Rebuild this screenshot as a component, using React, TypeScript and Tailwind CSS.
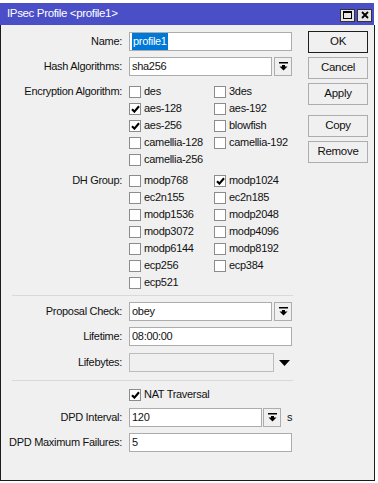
import React from 'react'

const FONT = "[font-family:'Liberation_Sans',Arial,sans-serif]"

function Check({ checked }: { checked?: boolean }) {
  return (
    <span className="w-[12px] h-[12px] bg-white border border-[#8c8c8c] flex items-center justify-center shrink-0">
      {checked && (
        <svg width="9" height="8" viewBox="0 0 9 8">
          <path d="M1 4.2 L3.4 6.6 L8 1.2" stroke="#000" strokeWidth="2.1" fill="none" />
        </svg>
      )}
    </span>
  )
}

function CheckItem({ label, checked }: { label: string; checked?: boolean }) {
  return (
    <div className="h-[17px] w-[85px] flex items-center gap-[3px] whitespace-nowrap">
      <Check checked={checked} />
      <span>{label}</span>
    </div>
  )
}

function DropIcon() {
  return (
    <svg width="9" height="9" viewBox="0 0 9 9">
      <rect x="0" y="0" width="9" height="1.5" fill="#000" />
      <path d="M3 3 H6 V4.5 H8.5 L4.5 8.5 L0.5 4.5 H3 Z" fill="#000" />
    </svg>
  )
}

function DropBtn() {
  return (
    <div className="w-[18px] h-[19px] border border-[#adadad] bg-[#f0f0f0] flex items-center justify-center shrink-0">
      <DropIcon />
    </div>
  )
}

function Label({ text }: { text: string }) {
  return <div className="w-[121px] text-right shrink-0 leading-[17px] whitespace-nowrap">{text}</div>
}

function Field({ value, width, disabled }: { value?: React.ReactNode; width: string; disabled?: boolean }) {
  return (
    <div
      className={`${width} h-[19px] border flex items-center pl-[2px] shrink-0 ${
        disabled ? 'bg-[#f0f0f0] border-[#bcbcbc]' : 'bg-white border-[#acacac]'
      }`}
    >
      {value}
    </div>
  )
}

function Button({ text, main }: { text: string; main?: boolean }) {
  return (
    <div
      className={`w-[60px] h-[22px] flex items-center justify-center bg-[#f0f0f0] border text-[11.5px] ${
        main ? 'border-[#1e1e1e]' : 'border-[#adadad]'
      }`}
    >
      {text}
    </div>
  )
}

function Separator({ className }: { className: string }) {
  return <div className={`ml-[11px] w-[281px] h-px bg-[#d9d9d9] ${className}`} />
}

export default function App() {
  return (
    <div className={`w-[378px] h-[483px] bg-white overflow-hidden text-[11px] tracking-[-0.3px] text-[#111] ${FONT}`}>
      <div className="h-[3px] bg-white" />
      <div className="w-[375px] h-[478px] flex flex-col">
        {/* Title bar */}
        <div className="h-[22px] bg-[#4b4fc7] flex items-center justify-between pl-[7px] pr-[2px] mr-[1px]">
          <span className="text-white text-[11.5px] tracking-[-0.35px]">IPsec Profile &lt;profile1&gt;</span>
          <div className="flex gap-[2px] mt-[2px]">
            <div className="w-[15px] h-[13px] bg-[#e6e6e6] border border-[#333] flex items-center justify-center">
              <div className="w-[9px] h-[8px] border border-black border-t-2" />
            </div>
            <div className="w-[15px] h-[13px] bg-[#e6e6e6] border border-[#333] flex items-center justify-center">
              <svg width="8" height="8" viewBox="0 0 8 8">
                <path d="M1 1 L7 7 M7 1 L1 7" stroke="#000" strokeWidth="1.8" />
              </svg>
            </div>
          </div>
        </div>

        {/* Body */}
        <div className="flex-1 bg-[#f0f0f0] border-l border-r border-b border-[#1c1c1c] flex">
          {/* Form */}
          <div className="w-[307px] pt-[7px]">
            <div className="flex items-center h-[19px]">
              <Label text="Name:" />
              <div className="ml-[7px]">
                <Field width="w-[163px]" value={<span className="bg-[#0078d7] text-white px-px">profile1</span>} />
              </div>
            </div>

            <div className="flex items-center h-[19px] mt-[6px]">
              <Label text="Hash Algorithms:" />
              <div className="ml-[7px] flex gap-[2px]">
                <Field width="w-[143px]" value="sha256" />
                <DropBtn />
              </div>
            </div>

            <div className="flex mt-[7px]">
              <Label text="Encryption Algorithm:" />
              <div className="ml-[7px] grid grid-cols-[85px_85px]">
                <CheckItem label="des" />
                <CheckItem label="3des" />
                <CheckItem label="aes-128" checked />
                <CheckItem label="aes-192" />
                <CheckItem label="aes-256" checked />
                <CheckItem label="blowfish" />
                <CheckItem label="camellia-128" />
                <CheckItem label="camellia-192" />
                <CheckItem label="camellia-256" />
              </div>
            </div>

            <div className="flex mt-[4px]">
              <Label text="DH Group:" />
              <div className="ml-[7px] grid grid-cols-[85px_85px]">
                <CheckItem label="modp768" />
                <CheckItem label="modp1024" checked />
                <CheckItem label="ec2n155" />
                <CheckItem label="ec2n185" />
                <CheckItem label="modp1536" />
                <CheckItem label="modp2048" />
                <CheckItem label="modp3072" />
                <CheckItem label="modp4096" />
                <CheckItem label="modp6144" />
                <CheckItem label="modp8192" />
                <CheckItem label="ecp256" />
                <CheckItem label="ecp384" />
                <CheckItem label="ecp521" />
              </div>
            </div>

            <Separator className="mt-[4px]" />

            <div className="flex items-center h-[19px] mt-[6px]">
              <Label text="Proposal Check:" />
              <div className="ml-[7px] flex gap-[2px]">
                <Field width="w-[143px]" value="obey" />
                <DropBtn />
              </div>
            </div>

            <div className="flex items-center h-[19px] mt-[6px]">
              <Label text="Lifetime:" />
              <div className="ml-[7px]">
                <Field width="w-[163px]" value="08:00:00" />
              </div>
            </div>

            <div className="flex items-center h-[19px] mt-[7px]">
              <Label text="Lifebytes:" />
              <div className="ml-[7px] flex items-center">
                <Field width="w-[145px]" disabled />
                <svg className="ml-[5px]" width="11" height="6" viewBox="0 0 11 6">
                  <path d="M0 0 H11 L5.5 6 Z" fill="#000" />
                </svg>
              </div>
            </div>

            <Separator className="mt-[8px]" />

            <div className="flex items-center h-[17px] mt-[5px] ml-[128px] gap-[3px]">
              <Check checked />
              <span>NAT Traversal</span>
            </div>

            <div className="flex items-center h-[19px] mt-[5px]">
              <Label text="DPD Interval:" />
              <div className="ml-[7px] flex items-center gap-[1px]">
                <Field width="w-[133px]" value="120" />
                <DropBtn />
                <span className="ml-[5px]">s</span>
              </div>
            </div>

            <div className="flex items-center h-[19px] mt-[6px]">
              <Label text="DPD Maximum Failures:" />
              <div className="ml-[7px]">
                <Field width="w-[163px]" value="5" />
              </div>
            </div>
          </div>

          {/* Buttons */}
          <div className="pt-[6px] flex flex-col">
            <Button text="OK" main />
            <div className="mt-[4px]"><Button text="Cancel" /></div>
            <div className="mt-[4px]"><Button text="Apply" /></div>
            <div className="mt-[10px]"><Button text="Copy" /></div>
            <div className="mt-[4px]"><Button text="Remove" /></div>
          </div>
        </div>
      </div>
    </div>
  )
}
